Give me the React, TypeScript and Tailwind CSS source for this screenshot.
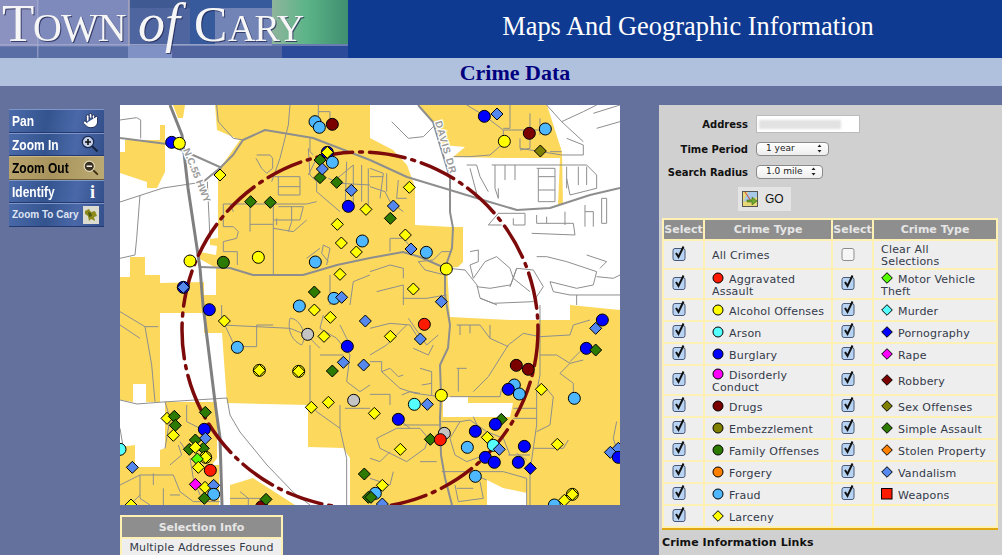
import { Hand } from 'lucide-react';

const C = {
  red: '#ff1a00', yel: '#ffff00', cy: '#55ffff', blu: '#0000ff', mag: '#ff00ff', dr: '#7a0000', ol: '#7f7f00',
  grn: '#2d7a00', or: '#ff8000', fr: '#4db8ff', van: '#5588ee', gry: '#c4c4c4', lime: '#55ff00',
};

type Mark = [string, string, number, number];

// o = circle, d = diamond; coordinates read off 3x crops, one list per map quadrant
const topLeft: Mark[] = [
  ['o', C.blu, 155, 112], ['o', C.yel, 178, 115], ['o', C.fr, 585, 50], ['o', C.fr, 598, 67], ['o', C.dr, 637, 58],
  ['o', C.blu, 622, 142], ['o', C.fr, 637, 172], ['o', C.blu, 685, 304], ['o', C.yel, 415, 457], ['o', C.yel, 210, 468],
  ['o', C.grn, 310, 472], ['o', C.fr, 586, 471], ['o', C.fr, 727, 408], ['o', C.fr, 642, 580], ['o', C.blu, 190, 547],
  ['d', C.yel, 300, 210], ['d', C.yel, 622, 142], ['d', C.grn, 600, 165], ['d', C.grn, 600, 218], ['d', C.grn, 650, 232],
  ['d', C.grn, 392, 290], ['d', C.grn, 451, 292], ['d', C.grn, 583, 561], ['d', C.van, 607, 192], ['d', C.van, 694, 256],
  ['d', C.van, 665, 577], ['d', C.van, 190, 547], ['d', C.yel, 738, 313], ['d', C.yel, 652, 358], ['d', C.yel, 664, 414],
  ['d', C.yel, 709, 441], ['d', C.yel, 660, 508],
];
const topRight: Mark[] = [
  ['o', C.blu, 343, 34], ['d', C.van, 381, 27], ['o', C.dr, 478, 85], ['o', C.fr, 526, 72], ['o', C.yel, 403, 109],
  ['d', C.ol, 511, 138], ['d', C.yel, 118, 247], ['d', C.van, 70, 303], ['d', C.grn, 61, 340], ['d', C.yel, 106, 390],
  ['d', C.van, 123, 432], ['o', C.fr, 169, 442], ['o', C.yel, 229, 492], ['d', C.yel, 130, 552], ['d', C.van, 214, 590],
];
const bottomLeft: Mark[] = [
  ['o', C.blu, 268, 14], ['d', C.yel, 313, 48], ['o', C.fr, 352, 127], ['o', C.yel, 418, 196], ['d', C.yel, 418, 196],
  ['o', C.yel, 536, 199], ['d', C.yel, 536, 199], ['o', C.fr, 538, 3], ['d', C.yel, 583, 15], ['d', C.yel, 631, 37],
  ['d', C.van, 736, 48], ['o', C.gry, 563, 88], ['d', C.yel, 612, 94], ['o', C.blu, 682, 124], ['d', C.van, 670, 172],
  ['d', C.van, 731, 180], ['d', C.grn, 637, 198], ['d', C.yel, 574, 307], ['d', C.yel, 625, 292], ['o', C.gry, 701, 286],
  ['d', C.grn, 733, 507], ['d', C.grn, 745, 577], ['d', C.yel, 141, 340], ['d', C.grn, 163, 334], ['d', C.grn, 166, 361],
  ['d', C.yel, 160, 391], ['d', C.grn, 256, 322], ['o', C.blu, 253, 373], ['d', C.van, 256, 400], ['d', C.grn, 226, 405],
  ['d', C.grn, 208, 433], ['d', C.grn, 250, 430], ['d', C.yel, 226, 427], ['o', C.yel, 257, 457], ['d', C.yel, 257, 457],
  ['d', C.lime, 232, 462], ['d', C.yel, 235, 487], ['o', C.red, 271, 496], ['d', C.mag, 226, 538], ['d', C.yel, 255, 547],
  ['d', C.van, 281, 541], ['o', C.fr, 281, 568], ['d', C.grn, 253, 580], ['o', C.cy, 0, 433], ['d', C.van, 37, 487],
  ['d', C.yel, 33, 600], ['o', C.dr, 425, 605], ['d', C.grn, 438, 583],
];
const bottomRight: Mark[] = [
  ['o', C.blu, 697, 45], ['d', C.van, 677, 70], ['o', C.blu, 649, 130], ['d', C.grn, 677, 135], ['o', C.dr, 439, 181],
  ['o', C.dr, 475, 193], ['o', C.fr, 433, 240], ['o', C.blu, 415, 253], ['o', C.fr, 448, 267], ['d', C.yel, 514, 253],
  ['o', C.fr, 613, 280], ['o', C.red, 163, 58], ['d', C.yel, 61, 94], ['d', C.van, 151, 102], ['o', C.yel, 214, 271],
  ['o', C.cy, 133, 298], ['d', C.van, 172, 298], ['d', C.yel, 13, 325], ['o', C.blu, 85, 343], ['d', C.grn, 394, 343],
  ['o', C.blu, 376, 358], ['o', C.blu, 316, 379], ['o', C.gry, 223, 385], ['d', C.grn, 181, 403], ['o', C.red, 211, 404],
  ['d', C.yel, 352, 397], ['d', C.yel, 91, 433], ['o', C.fr, 292, 427], ['o', C.cy, 370, 421], ['d', C.van, 388, 433],
  ['o', C.blu, 463, 424], ['o', C.blu, 346, 457], ['o', C.blu, 373, 472], ['o', C.blu, 445, 472], ['d', C.blu, 481, 490],
  ['d', C.yel, 562, 418], ['d', C.van, 721, 442], ['d', C.van, 745, 430], ['o', C.blu, 745, 457], ['o', C.fr, 316, 514],
  ['d', C.yel, 37, 541], ['o', C.fr, 16, 565], ['d', C.grn, 3, 577], ['d', C.van, 37, 597], ['o', C.fr, 553, 600],
  ['d', C.yel, 583, 586], ['o', C.yel, 607, 568], ['d', C.yel, 607, 568],
];

const yellowAreas = [
  '95,0 97,25 120,35 100,63 98,72 98,133 90,134 90,140 97,141 96,150 80,147 80,154 96,163 96,190 84,190 84,228 102,228 107,298 188,300 188,342 223,343 230,353 230,400 367,400 367,375 383,383 407,388 407,400 500,400 500,205 450,200 450,215 390,215 330,212 327,163 338,162 343,157 343,122 332,122 295,120 295,82 287,60 273,45 250,33 250,0',
  '53,0 65,0 63,13 58,13',
  '40,20 45,20 45,67 37,83 27,83 27,77 0,68 0,47 5,47 5,35 40,35',
  '298,0 313,17 323,40 345,42 333,52 383,53 440,53 438,100 443,100 442,47 427,0',
  '0,172 10,172 10,152 25,152 25,170 40,170 40,178 84,177 84,208 40,208 40,297 26,297 26,279 13,279 13,297 0,295',
  '45,297 97,297 97,353 92,360 99,360 99,400 0,400 0,342 15,340 15,362 40,362 40,345 45,343',
  '110,380 133,373 175,400 110,400',
];

// white holes that sit inside the big yellow area
const whiteHoles = ['323,292 348,292 348,298 393,298 390,312 323,312'];

const quadrants: { x: number; y: number; marks: Mark[]; streets: string }[] = [
  {
    x: 0, y: 0, marks: topLeft,
    streets: 'M0 45L50 38L62 45V100M60 270L50 400L45 450L0 460M262 230L270 400M290 0L295 50L340 100L370 105M510 0L505 60L480 160L455 230M595 0V45M595 20H630V60M570 100V140L580 150M565 130L570 210L590 230V260L660 320M590 160L565 210M410 150H450L458 160V190L440 205L425 190L408 160M455 215H540V270H475V215M475 245H540M475 305H550L540 345H460M515 305V350L505 380M470 340V360M460 300V510M310 297H560L590 290M330 297L340 320M390 300V380M390 358H460M310 297V365H340L355 380L350 400L310 410V440H352V480M460 370L520 380L560 345M640 230L700 180M680 170L675 320M700 180V300M725 180V290M745 190V300M625 220L660 235L750 240M620 480L630 430L610 420L605 445L625 470M630 510V600M690 600L700 530L750 510M600 430L560 460',
  },
  {
    x: 250, y: 0, marks: topRight,
    streets: 'M65 50L115 100L160 95L195 60M0 190L40 205L30 280M0 215H40M0 245L45 260L60 290L100 320M50 205V260M85 225L80 280H110M290 0L340 30L400 75V105M420 0V70H400M400 75H540M480 25V130L450 135M510 40V90M450 100V130L575 150M540 140H575M400 115L360 150L300 155H250M530 0L575 50L640 20L680 0M590 100L640 120V150H575M575 50L640 110M670 25L750 0M680 70L750 50M290 180H320L330 215L355 260M300 190L320 265M365 180H650L680 210V250L600 270L590 220M375 180V250L385 280V250M405 180V225M435 180V225M500 190H555V290H505V190M505 215H555M505 255H555M590 185V250M625 185V240M650 185V240M355 360L385 325H465V360H430V340M355 360H395M500 330V355H610L615 390L485 385M530 335V355M585 320V360M645 300V365M645 320H670V365M695 280H710V355H695ZM60 400V440M60 400H100L125 430M145 470L165 495L225 510M145 470L190 465L215 440H245M0 500L60 480L100 490V520M20 560L100 540V580H170L230 570M100 575V600M300 440L325 435V470L300 480L310 520L345 470L380 455L420 490L430 520L420 545L440 490L490 495L520 545L490 590M320 545L360 550L420 540M500 455H530L590 470L680 500L670 540L620 550L540 530L550 560L600 570H750M650 450L710 470L690 490M620 600V570M330 580L370 595L490 590M680 515L730 520L750 510M440 490L430 520L480 560',
  },
  {
    x: 0, y: 200, marks: bottomLeft,
    streets: 'M0 20L75 65L95 180L105 290M75 65H115M0 60L60 100M305 0V40L345 125H410V60H460M305 60L410 65L510 70L560 90L600 130M510 40C500 80 520 110 545 120C560 100 550 50 515 40ZM570 120V290M600 150H670M610 30L600 70L650 100L690 150L680 230L720 260L750 240M690 120L660 60M570 290L590 320L660 370L680 460V600M675 310H750M660 370V300M135 290L150 340L135 430M200 300V350L240 370M175 420L185 450L150 480M180 410L200 440M210 460L220 520L240 570M0 540L60 510H160L180 560L220 590H300M100 505V540M60 510V580L90 600M130 550V600M150 570H180M0 370L10 430M30 600L60 570M360 560L385 580V600M330 580H420',
  },
  {
    x: 250, y: 200, marks: bottomRight,
    streets: 'M0 70L60 55L120 60L145 100M115 40L170 120L205 90M0 150L50 120L110 60M130 130L175 150L190 120M0 170H35V200L90 250L135 265L210 275M35 200L60 190L85 215L100 210M150 190L185 200V270M155 240L185 235M0 268H60V300M95 270L120 260L150 265M260 60H330L360 100M270 60V90M300 60V85M360 60V100L415 125M260 190H290M265 190V260M240 275H390L395 250M310 260L355 215L415 120L460 85L510 95L600 90L610 60L660 45M510 0V210L500 260V360L480 500V600M510 150H560L600 175L640 165M600 175L570 205L610 235V265M520 240L550 275L540 360L500 380M640 130L600 170M430 310H500M430 340H500M215 350H270L300 345L350 380L400 400M270 350L240 400L255 450L290 470L345 450M310 335L330 380M215 500H400L470 520V600M400 400L420 450M415 450H480M490 430H580L595 405M440 445L470 465M20 400L80 370H150L175 400L165 430L110 470L30 430L20 400M100 360H210M60 440L30 470L0 460M150 470H200M255 540L265 590L340 580L330 530M260 550H310M350 525L290 500M70 500L60 540L0 520M70 330L120 370M740 350L730 400L745 450',
  },
];

function MapMarker({ kind, fill, x, y, r = 6 }: { kind: string; fill: string; x: number; y: number; r?: number }) {
  if (kind === 'o') return <circle cx={x} cy={y} r={r} fill={fill} stroke="#000" strokeWidth={1} />;
  return <polygon points={`${x},${y - r} ${x + r},${y} ${x},${y + r} ${x - r},${y}`} fill={fill} stroke="#000" strokeWidth={1} />;
}

function CrimeMap() {
  return (
    <svg width={500} height={400} viewBox="0 0 500 400" className="block bg-white">
      {yellowAreas.map((p) => <polygon key={p} points={p} fill="#fcd95c" />)}
      {whiteHoles.map((p) => <polygon key={p} points={p} fill="#fff" />)}
      <g fill="none" stroke="#8e8e8e" strokeWidth={1} strokeLinejoin="round">
        {quadrants.map((q) => (
          <g key={q.x + '-' + q.y} transform={`translate(${q.x} ${q.y}) scale(0.3333)`} strokeWidth={3}>
            <path d={q.streets} />
          </g>
        ))}
        <g strokeWidth={2}>
          <path d="M0 33L47 39L73 50L102 63M83 77L100 63L113 50L123 35L145 25L193 33L250 55L287 72L330 85L363 95L397 105L430 103L470 90L500 83" />
          <path d="M80 162L110 163L133 170L183 170L217 160L250 153L283 147L300 152L325 163" />
          <path d="M298 0L313 17L330 73V107L333 123L332 143L325 163V190L330 220L328 243L320 260L321 290L320 313L321 350L325 373L332 400" />
        </g>
        <path d="M83 77L43 83L0 97M107 293L110 310L120 327L147 360L173 387L190 400M0 295L17 299L43 297L107 293M325 163L345 165L357 180L360 193L377 200" />
        <path d="M50 0L62 30L68 83L80 163L83 200L95 297L100 333L102 400" stroke="#808080" strokeWidth={3} />
      </g>
      <g fontFamily='"Liberation Sans", sans-serif' fontWeight={700} fontSize={10} fill="#9a9a9a" stroke="#fff" strokeWidth={2.5} paintOrder="stroke">
        <text x={63} y={45} transform="rotate(68 63 45)">N.C.55 HWY</text>
        <text x={315} y={17} transform="rotate(74 315 17)" letterSpacing={1}>DAVIS DR</text>
      </g>
      <circle cx={240} cy={225} r={178} fill="none" stroke="#7d0a0a" strokeWidth={3.5} strokeLinecap="round" strokeDasharray="36 7 3 7" />
      {quadrants.map((q) =>
        q.marks.map((m, i) => (
          <MapMarker key={q.x + '-' + q.y + '-' + i} kind={m[0]} fill={m[1]} x={q.x + m[2] / 3} y={q.y + m[3] / 3} />
        )),
      )}
    </svg>
  );
}

function Logo() {
  return (
    <svg width={348} height={58} viewBox="0 0 348 58" className="block shrink-0">
      <defs>
        <linearGradient id="greenFade" x1="0" x2="1" y1="0" y2="0">
          <stop offset="0" stopColor="#8fb59c" />
          <stop offset="0.45" stopColor="#5cb488" />
          <stop offset="1" stopColor="#3f8e70" />
        </linearGradient>
      </defs>
      <rect width={348} height={58} fill="#6a7cb0" />
      <rect x={0} y={0} width={130} height={46} fill="#8c92c0" />
      <rect x={38} y={0} width={92} height={46} fill="#7d8abb" />
      <rect x={130} y={0} width={142} height={44} fill="#4f659f" />
      <rect x={190} y={0} width={82} height={44} fill="#365a9c" />
      <rect x={130} y={0} width={60} height={8} fill="#3f5a92" />
      <rect x={215} y={8} width={57} height={36} fill="#7283b6" />
      <rect x={272} y={0} width={76} height={44} fill="url(#greenFade)" />
      <rect x={0} y={47} width={128} height={11} fill="#5a6ea6" />
      <rect x={128} y={46} width={44} height={12} fill="#8091c6" />
      <rect x={172} y={46} width={110} height={12} fill="#52649f" />
      <rect x={282} y={46} width={66} height={12} fill="#2c4a9a" />
      <rect x={0} y={44} width={272} height={1.5} fill="#a9aed0" opacity={0.7} />
      <rect x={37} y={0} width={1.5} height={58} fill="#aab0d2" opacity={0.6} />
      <rect x={128} y={0} width={1.5} height={46} fill="#b0a8b8" opacity={0.7} />
      <text
        y={41}
        fill="#f6f6f6"
        fontFamily='"Liberation Serif", serif'
        className="[filter:drop-shadow(1.5px_1.5px_0_rgba(30,35,80,0.75))]"
      >
        <tspan x={2} fontSize={53}>T</tspan>
        <tspan x={33} fontSize={40} letterSpacing={-1}>OWN</tspan>
        <tspan x={138} fontSize={54} fontStyle="italic">of</tspan>
        <tspan x={194} fontSize={50}>C</tspan>
        <tspan x={228} fontSize={38} letterSpacing={-1}>ARY</tspan>
      </text>
    </svg>
  );
}

function Magnifier({ minus }: { minus?: boolean }) {
  return (
    <svg width={18} height={18} viewBox="0 0 18 18">
      <path d="M11 11l5.5 5.5" stroke={minus ? '#3a2c10' : '#16203c'} strokeWidth={2} />
      <circle cx={7} cy={7} r={5.7} fill={minus ? '#3a3020' : '#c5d2ea'} stroke={minus ? '#e6dcc0' : '#1c2a50'} strokeWidth={1.3} />
      <path d={minus ? 'M4 7h6' : 'M4 7h6M7 4v6'} stroke={minus ? '#fff' : '#111'} strokeWidth={1.6} />
    </svg>
  );
}

function CaryThumb() {
  return (
    <svg width={16} height={18} viewBox="0 0 16 18">
      <rect width={16} height={18} fill="#dcdcd0" />
      <path d="M2 5l4-2 2 3 4-1 2 5-3 1 1 4-4-2-2 2-1-5-3-2z" fill="#8f8a1e" />
      <path d="M5 6l3 1 1 3-3 1z" fill="#4c5a10" />
    </svg>
  );
}

function ToolButton({ label, icon, active, small }: { label: string; icon: React.ReactNode; active?: boolean; small?: boolean }) {
  return (
    <div
      className={
        'flex h-[23.6px] items-center justify-between border-t border-b pl-[3px] pr-[5px] ' +
        (active
          ? 'border-t-[#c8b888] border-b-[#6a5a30] bg-[linear-gradient(100deg,#b8a46c,#a8945c_45%,#bcaa74)] text-black'
          : 'border-t-[#7d95c8] border-b-[#22386e] bg-[linear-gradient(100deg,#4a6aaa,#34548f_40%,#4a68a8_70%,#33508c)] text-white')
      }
    >
      <span
        className={
          small
            ? "text-[10px] leading-none font-bold text-[#dfe4f2] [font-family:'Liberation_Sans',sans-serif]"
            : "origin-left scale-x-[0.8] text-[15px] leading-none font-bold whitespace-nowrap [font-family:'Liberation_Sans',sans-serif]"
        }
      >
        {label}
      </span>
      {icon}
    </div>
  );
}

function Toolbar() {
  return (
    <div className="ml-[9px] w-[95px] pt-[4px]">
      <ToolButton label="Pan" icon={<Hand size={17} fill="#fff" stroke="#1b2a55" strokeWidth={1.4} />} />
      <ToolButton label="Zoom In" icon={<Magnifier />} />
      <ToolButton label="Zoom Out" icon={<Magnifier minus />} active />
      <ToolButton
        label="Identify"
        icon={<span className="pr-[4px] text-[18px] leading-none font-bold text-white [font-family:'Liberation_Serif',serif]">i</span>}
      />
      <ToolButton label="Zoom To Cary" icon={<CaryThumb />} small />
    </div>
  );
}

function Check({ on = true }: { on?: boolean }) {
  return (
    <svg width={15} height={16} viewBox="0 0 15 16" className="relative -top-[2px] ml-[8px] block">
      <rect x={1} y={3.5} width={12} height={12} rx={2} fill={on ? '#b9d4f2' : '#f6f6f6'} stroke={on ? '#47587a' : '#8c8c8c'} strokeWidth={1} />
      {on && <path d="M4 8L6.5 12L11.5 1.5" fill="none" stroke="#111" strokeWidth={2} />}
    </svg>
  );
}

function Icon({ kind, fill }: { kind: string; fill: string }) {
  return (
    <svg width={12} height={12} viewBox="0 0 12 12" className="relative -top-[2px] mr-[5px] inline-block align-middle">
      {kind === 'o' && <circle cx={6} cy={6} r={5} fill={fill} stroke="#000" />}
      {kind === 'd' && <polygon points="6,0.7 11.3,6 6,11.3 0.7,6" fill={fill} stroke="#000" />}
      {kind === 's' && <rect x={0.5} y={0.5} width={10.5} height={10.5} fill={fill} stroke="#000" />}
    </svg>
  );
}

type Crime = { k: string; c: string; t: string } | null;

const rows: { h: string; a: Crime; b: Crime }[] = [
  { h: 'h-[28px]', a: { k: 'o', c: C.red, t: 'Aggravated Assault' }, b: { k: 'd', c: C.lime, t: 'Motor Vehicle Theft' } },
  { h: 'h-[20px]', a: { k: 'o', c: C.yel, t: 'Alcohol Offenses' }, b: { k: 'd', c: C.cy, t: 'Murder' } },
  { h: 'h-[20px]', a: { k: 'o', c: C.cy, t: 'Arson' }, b: { k: 'd', c: C.blu, t: 'Pornography' } },
  { h: 'h-[20px]', a: { k: 'o', c: C.blu, t: 'Burglary' }, b: { k: 'd', c: C.mag, t: 'Rape' } },
  { h: 'h-[28px]', a: { k: 'o', c: C.mag, t: 'Disorderly Conduct' }, b: { k: 'd', c: C.dr, t: 'Robbery' } },
  { h: 'h-[20px]', a: { k: 'o', c: C.dr, t: 'Drugs' }, b: { k: 'd', c: C.ol, t: 'Sex Offenses' } },
  { h: 'h-[20px]', a: { k: 'o', c: C.ol, t: 'Embezzlement' }, b: { k: 'd', c: C.grn, t: 'Simple Assault' } },
  { h: 'h-[20px]', a: { k: 'o', c: C.grn, t: 'Family Offenses' }, b: { k: 'd', c: C.or, t: 'Stolen Property' } },
  { h: 'h-[20px]', a: { k: 'o', c: C.or, t: 'Forgery' }, b: { k: 'd', c: C.van, t: 'Vandalism' } },
  { h: 'h-[20px]', a: { k: 'o', c: C.fr, t: 'Fraud' }, b: { k: 's', c: '#ff1a00', t: 'Weapons' } },
  { h: 'h-[20px]', a: { k: 'd', c: C.yel, t: 'Larceny' }, b: null },
];

function CrimeTable() {
  const th = 'bg-[#8e8e8e] p-0 text-center text-[11px] leading-[19px] font-bold text-[#e6e6e6]';
  const td = 'bg-[#eeeeee] p-0 align-middle';
  const name = 'bg-[#eeeeee] pt-[3px] pb-0 pr-[3px] pl-[7px] text-left align-middle text-[11px] leading-[12px] tracking-[0.2px] text-[#333a4a]';
  return (
    <table className="w-[336px] table-fixed border-separate border-spacing-[2px] bg-[#fff0b4]">
      <colgroup>
        <col className="w-[39px]" />
        <col className="w-[126px]" />
        <col className="w-[39px]" />
        <col />
      </colgroup>
      <thead>
        <tr className="h-[19px]">
          <th className={th}>Select</th>
          <th className={th}>Crime Type</th>
          <th className={th}>Select</th>
          <th className={th}>Crime Type</th>
        </tr>
      </thead>
      <tbody>
        <tr className="h-[27px]">
          <td className={td}><Check /></td>
          <td className={name}>All Crimes</td>
          <td className={td}><Check on={false} /></td>
          <td className={name}>Clear All<br />Selections</td>
        </tr>
        {rows.map((r) => (
          <tr key={r.a?.t} className={r.h}>
            <td className={td}><Check /></td>
            <td className={name}>
              {r.a && <Icon kind={r.a.k} fill={r.a.c} />}
              {r.a?.t}
            </td>
            <td className={td}>{r.b && <Check />}</td>
            <td className={name}>
              {r.b && <Icon kind={r.b.k} fill={r.b.c} />}
              {r.b?.t}
            </td>
          </tr>
        ))}
      </tbody>
    </table>
  );
}

function FakeSelect({ label, w }: { label: string; w: string }) {
  return (
    <div className={w + ' flex h-[14px] items-center justify-between rounded-[4px] border border-[#8a8a8a] bg-[linear-gradient(#ffffff,#eeeeee)] pr-[6px] pl-[9px] text-[9px] text-[#222]'}>
      <span>{label}</span>
      <svg width={5} height={9} viewBox="0 0 5 9">
        <path d="M2.5 0.5L4.5 3H0.5zM2.5 8.5L4.5 6H0.5z" fill="#222" />
      </svg>
    </div>
  );
}

function SearchPanel() {
  const label = 'w-[89px] pt-[1px] text-right text-[10px] font-bold text-[#111]';
  return (
    <div className="ml-[39px] flex h-[450px] w-[343px] flex-col bg-[#d0d0d0] pt-[10px] [font-family:'DejaVu_Sans',sans-serif]">
      <div className="flex h-[18px] items-center gap-[8px]">
        <div className={label}>Address</div>
        <div className="flex h-[18px] w-[104px] items-center border border-[#bbb] bg-white pl-[2px]">
          <div className="h-[9px] w-[82px] bg-[#e2e2e2] blur-[1px]" />
        </div>
      </div>
      <div className="mt-[8px] flex h-[15px] items-center gap-[8px]">
        <div className={label}>Time Period</div>
        <FakeSelect label="1 year" w="w-[73px]" />
      </div>
      <div className="mt-[8px] flex h-[15px] items-center gap-[8px]">
        <div className={label}>Search Radius</div>
        <FakeSelect label="1.0 mile" w="w-[67px]" />
      </div>
      <div className="mt-[8px] ml-[79px] flex h-[24px] w-[53px] items-center gap-[7px] bg-[#e4e4e4] pl-[4px]">
        <svg width={16} height={16} viewBox="0 0 16 16">
          <rect x={0.5} y={0.5} width={15} height={15} fill="#e8d878" stroke="#555" />
          <path d="M1 11L6 1h9v5z" fill="#a8c8e8" />
          <path d="M3 1l6 9" stroke="#d04030" />
          <path d="M5 9h5V6l5 4-5 4v-3H5z" fill="#6fa832" stroke="#3c6a18" strokeWidth={0.6} />
        </svg>
        <span className="text-[12px] leading-none text-[#111] [font-family:'Liberation_Sans',sans-serif]">GO</span>
      </div>
      <div className="mt-[7px] ml-[3px]">
        <CrimeTable />
        <div className="h-[2px] w-[336px] bg-[#e0a810]" />
        <div className="mt-[5px] text-[11px] font-bold tracking-[0.1px] text-[#111]">Crime Information Links</div>
      </div>
    </div>
  );
}

export default function App() {
  return (
    <div className="h-[555px] w-[1002px] overflow-hidden bg-[#65719d]">
      <div className="flex h-[58px] items-center bg-[#0f3a91]">
        <Logo />
        <div className="flex-1 pb-[5px] pl-[26px] text-center text-[26.4px] text-white [font-family:'Liberation_Serif',serif]">
          Maps And Geographic Information
        </div>
      </div>
      <div className="flex h-[28px] items-center justify-center bg-[#b0c1de] pl-[28px] text-[22px] font-bold text-[#00007f] [font-family:'Liberation_Serif',serif]">
        Crime Data
      </div>
      <div className="flex pt-[19px]">
        <Toolbar />
        <div className="ml-[16px] w-[500px]">
          <CrimeMap />
          <div className="mt-[10px] w-[163px] border-2 border-[#fff0b4] [font-family:'DejaVu_Sans',sans-serif]">
            <div className="bg-[#8e8e8e] pt-[1px] text-center text-[11px] leading-[19px] font-bold text-[#e6e6e6]">Selection Info</div>
            <div className="border-t-2 border-[#fff0b4] bg-[#eeeeee] text-center text-[11px] leading-[18px] tracking-[0.15px] text-[#333a4a]">
              Multiple Addresses Found
            </div>
          </div>
        </div>
        <SearchPanel />
      </div>
    </div>
  );
}
